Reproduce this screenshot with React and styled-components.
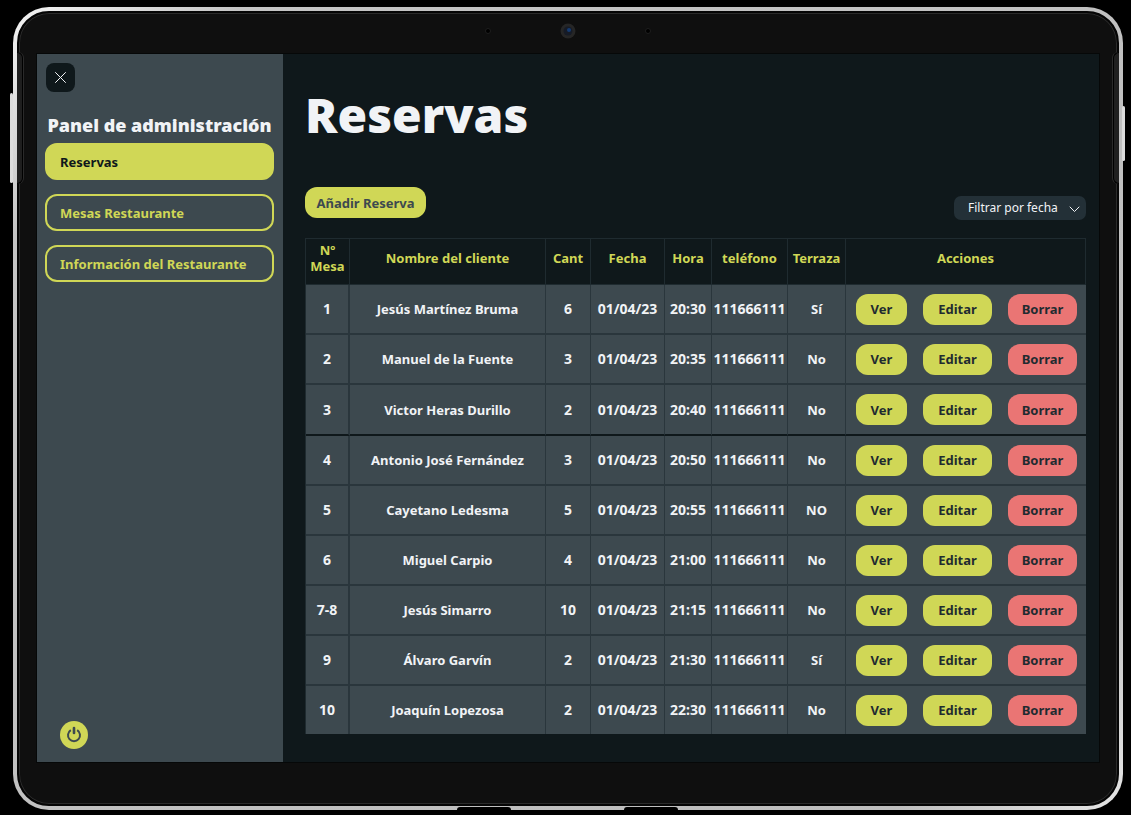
import React from 'react';
import styled, { createGlobalStyle, css } from 'styled-components';

const c = {
  ink: '#0f181b',
  slate: '#3d494f',
  line: '#2a363c',
  headLine: '#1f2b30',
  lime: '#d0d756',
  red: '#ea7574',
  white: '#f1f3f6',
  field: '#233037',
};

const GlobalStyle = createGlobalStyle`
  *, *::before, *::after { box-sizing: border-box; }
  body {
    margin: 0;
    background: #000;
    color: ${c.white};
    font-family: "Noto Sans", sans-serif;
    font-size: 13px;
    line-height: 16px;
  }
  button, select { font: inherit; color: inherit; cursor: pointer; }
`;

const Page = styled.div`
  min-height: 100vh;
  padding: 7px 8px 5px 13px;
`;

const Tablet = styled.div`
  position: relative;
  min-height: calc(100vh - 12px);
  border-radius: 36px;
  padding: 4px;
  background: linear-gradient(135deg, #f4f4f4 0, #c4c4c4 12%, #bdbdbd 88%, #e6e6e6 100%);
  display: flex;
`;

const Bezel = styled.div`
  flex: 1;
  min-width: 0;
  border: 2px solid #050505;
  border-radius: 32px;
  padding: 41px 18px 42px 18px;
  background: #0f0f0f;
  box-shadow: inset 0 0 0 1px #2a2a2a;
  display: flex;
`;

const SideKey = styled.span`
  position: absolute;
  width: 3px;
  border-radius: 2px;
  background: #dcdcdc;
  ${(p) => (p.$side === 'left'
    ? css`left: -3px; top: 86px; height: 90px;`
    : css`right: -2px; top: 99px; height: 55px;`)}
`;

const Grip = styled.span`
  position: absolute;
  top: 45px;
  width: 6px;
  height: 132px;
  background: #1f1f1f;
  border: 1px solid #000;
  ${(p) => (p.$side === 'left'
    ? css`left: 4px; border-radius: 0 6px 6px 0; border-left: 0; box-shadow: 1px 0 #2a2a2a;`
    : css`right: 4px; border-radius: 6px 0 0 6px; border-right: 0; box-shadow: -1px 0 #2a2a2a;`)}
`;

const Foot = styled.span`
  position: absolute;
  bottom: 0;
  left: ${(p) => p.$left};
  width: 54px;
  height: 3px;
  border-radius: 5px 5px 0 0;
  background: #000;
`;

const Sensors = styled.svg`
  position: absolute;
  top: 15px;
  left: 50%;
  transform: translateX(-50%);
`;

const Screen = styled.div`
  flex: 1;
  min-width: 0;
  display: flex;
  background: ${c.ink};
  box-shadow: 0 0 0 1px #060808;
`;

const Sidebar = styled.aside`
  flex: 0 0 246px;
  padding: 9px 9px 13px 8px;
  background: ${c.slate};
  display: flex;
  flex-direction: column;
`;

const CloseButton = styled.button`
  width: 29px;
  height: 29px;
  margin-left: 1px;
  padding: 0;
  border: 0;
  border-radius: 8px;
  background: ${c.ink};
  display: grid;
  place-items: center;
`;

const PanelTitle = styled.h2`
  margin: 21px 0 6px;
  font-size: 18px;
  line-height: 24px;
  font-weight: 900;
  text-align: center;
  white-space: nowrap;
`;

const Nav = styled.nav`
  display: flex;
  flex-direction: column;
  gap: 14px;
`;

const NavLink = styled.a`
  height: 37px;
  padding: 0 13px;
  border: 2px solid ${c.lime};
  border-radius: 12px;
  display: flex;
  align-items: center;
  font-weight: 700;
  text-decoration: none;
  white-space: nowrap;
  color: ${(p) => (p.$active ? c.ink : c.lime)};
  background: ${(p) => (p.$active ? c.lime : 'transparent')};
`;

const PowerButton = styled.button`
  width: 28px;
  height: 28px;
  margin: auto 0 0 15px;
  padding: 0;
  border: 0;
  border-radius: 50%;
  background: ${c.lime};
  color: ${c.slate};
  display: grid;
  place-items: center;
`;

const Main = styled.main`
  flex: 1;
  min-width: 0;
  padding: 29px 13px 28px 22px;
`;

const Title = styled.h1`
  margin: 0;
  font-size: 48px;
  line-height: 64px;
  font-weight: 900;
`;

const Toolbar = styled.div`
  margin-top: 40px;
  height: 51px;
  display: flex;
  justify-content: space-between;
`;

const Button = styled.button`
  height: 31px;
  padding: 0;
  width: ${(p) => p.$width};
  border: 0;
  border-radius: 12px;
  background: ${(p) => (p.$danger ? c.red : c.lime)};
  color: ${(p) => (p.$soft ? c.slate : '#1f2b30')};
  font-weight: 700;
  white-space: nowrap;
`;

const Filter = styled.label`
  position: relative;
  width: 132px;
  height: 24px;
  margin-top: 9px;
`;

const FilterSelect = styled.select`
  appearance: none;
  width: 100%;
  height: 24px;
  padding: 0 26px 0 14px;
  border: 0;
  border-radius: 7px;
  background: ${c.field};
  font-size: 12px;
`;

const Chevron = styled.svg`
  position: absolute;
  right: 6px;
  top: 10px;
  pointer-events: none;
`;

const Table = styled.table`
  width: 100%;
  table-layout: fixed;
  border-collapse: separate;
  border-spacing: 0;
  border-left: 1px solid ${c.headLine};
  font-weight: 700;
  text-align: center;
`;

const Col = styled.col`
  width: ${(p) => p.$width};
`;

const HeadCell = styled.th`
  height: 47px;
  padding: 0 0 7px;
  border: solid ${c.headLine};
  border-width: 1px 1px 1px 0;
  color: ${c.lime};
`;

const Row = styled.tr`
  height: 50px;
  background: ${c.slate};

  &:nth-child(3) { height: 51px; }
  &:last-child { height: 48px; }
`;

const Cell = styled.td`
  padding: 0;
  border: solid ${c.line};
  border-width: 0 1px 2px 0;
  font-size: ${(p) => (p.$numeric ? '14px' : '13px')};
  white-space: nowrap;

  &:first-child { border-right-width: 2px; }
  &:last-child { border-right-width: 0; }
  ${Row}:nth-child(3) & { border-bottom-color: ${c.ink}; }
  ${Row}:last-child & { border-bottom: 0; }
`;

const Actions = styled.div`
  display: flex;
  padding-left: 10px;
  gap: 16px;
`;

const columns = [
  ['Nº Mesa', '44px'],
  ['Nombre del cliente', 'auto'],
  ['Cant', '45px'],
  ['Fecha', '74px'],
  ['Hora', '47px'],
  ['teléfono', '76px'],
  ['Terraza', '58px'],
  ['Acciones', '240px'],
];

const bookings = [
  ['1', 'Jesús Martínez Bruma', '6', '20:30', 'Sí'],
  ['2', 'Manuel de la Fuente', '3', '20:35', 'No'],
  ['3', 'Victor Heras Durillo', '2', '20:40', 'No'],
  ['4', 'Antonio José Fernández', '3', '20:50', 'No'],
  ['5', 'Cayetano Ledesma', '5', '20:55', 'NO'],
  ['6', 'Miguel Carpio', '4', '21:00', 'No'],
  ['7-8', 'Jesús Simarro', '10', '21:15', 'No'],
  ['9', 'Álvaro Garvín', '2', '21:30', 'Sí'],
  ['10', 'Joaquín Lopezosa', '2', '22:30', 'No'],
];

export default function App() {
  return (
    <Page>
      <GlobalStyle />
      <Tablet>
        <SideKey $side="left" />
        <SideKey $side="right" />
        <Bezel>
          <Screen>
            <Sidebar>
              <CloseButton aria-label="Cerrar">
                <svg width="11" height="11" viewBox="0 0 11 11" stroke={c.white} strokeWidth="1" strokeLinecap="round">
                  <path d="M.5 .5l10 10M10.500 .5l-10 10" />
                </svg>
              </CloseButton>
              <PanelTitle>Panel de administración</PanelTitle>
              <Nav>
                <NavLink href="#reservas" $active>Reservas</NavLink>
                <NavLink href="#mesas">Mesas Restaurante</NavLink>
                <NavLink href="#informacion">Información del Restaurante</NavLink>
              </Nav>
              <PowerButton aria-label="Salir">
                <svg width="16" height="18" viewBox="0 0 16 18" fill="none" stroke="currentColor">
                  <path d="M4.800 4.200a6 6 0 1 0 6.400 0" strokeWidth="2" />
                  <path d="M8 2v5" strokeWidth="2.600" strokeLinecap="round" />
                </svg>
              </PowerButton>
            </Sidebar>
            <Main>
              <Title>Reservas</Title>
              <Toolbar>
                <Button $width="121px" $soft>Añadir Reserva</Button>
                <Filter>
                  <FilterSelect aria-label="Filtrar por fecha">
                    <option>Filtrar por fecha</option>
                  </FilterSelect>
                  <Chevron width="11" height="7" viewBox="0 0 11 7" fill="none" stroke={c.white} strokeLinecap="round">
                    <path d="M1 1l4.500 4.500L10 1" />
                  </Chevron>
                </Filter>
              </Toolbar>
              <Table>
                <colgroup>
                  {columns.map(([name, width]) => <Col key={name} $width={width} />)}
                </colgroup>
                <thead>
                  <tr>
                    {columns.map(([name]) => <HeadCell key={name} scope="col">{name}</HeadCell>)}
                  </tr>
                </thead>
                <tbody>
                  {bookings.map(([mesa, cliente, cant, hora, terraza]) => (
                    <Row key={mesa}>
                      <Cell $numeric>{mesa}</Cell>
                      <Cell>{cliente}</Cell>
                      <Cell $numeric>{cant}</Cell>
                      <Cell $numeric>01/04/23</Cell>
                      <Cell $numeric>{hora}</Cell>
                      <Cell $numeric>111666111</Cell>
                      <Cell>{terraza}</Cell>
                      <Cell>
                        <Actions>
                          <Button $width="51px">Ver</Button>
                          <Button $width="69px">Editar</Button>
                          <Button $width="69px" $danger>Borrar</Button>
                        </Actions>
                      </Cell>
                    </Row>
                  ))}
                </tbody>
              </Table>
            </Main>
          </Screen>
        </Bezel>
        <Grip $side="left" />
        <Grip $side="right" />
        <Sensors width="168" height="18" viewBox="0 0 168 18">
          <circle cx="4" cy="9" r="2.500" fill="#000" stroke="#1e1e1e" />
          <circle cx="84" cy="9" r="7.500" fill="#262626" />
          <circle cx="84" cy="9" r="4.500" fill="#161b26" />
          <circle cx="85" cy="8" r="2" fill="#143a72" />
          <circle cx="164" cy="9" r="2.500" fill="#000" stroke="#1e1e1e" />
        </Sensors>
        <Foot $left="40%" />
        <Foot $left="55%" />
      </Tablet>
    </Page>
  );
}
